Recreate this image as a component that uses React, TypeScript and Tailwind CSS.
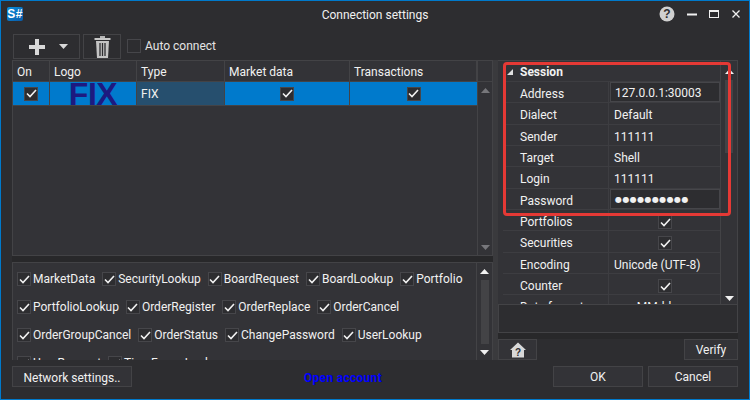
const font = "font-['Roboto','Noto_Sans',sans-serif]";

const Check = () => (
  <svg width="11" height="9" viewBox="0 0 11 9" fill="none">
    <path d="M1 4.5 L4 7.5 L10 1" stroke="#f1f1f1" strokeWidth="1.6" />
  </svg>
);

const Box = ({ className = "" }: { className?: string }) => (
  <span className={`flex h-[14px] w-[14px] shrink-0 items-center justify-center border border-[#46464a] bg-[#2d2d30] ${className}`}>
    <Check />
  </span>
);

const Arrow = ({ up, color = "#f1f1f1" }: { up?: boolean; color?: string }) => (
  <svg width="9" height="5" viewBox="0 0 9 5">
    <path d={up ? "M4.5 0 L9 5 L0 5 Z" : "M0 0 L9 0 L4.5 5 Z"} fill={color} />
  </svg>
);

const capabilities = [
  ["MarketData", "SecurityLookup", "BoardRequest", "BoardLookup", "Portfolio"],
  ["PortfolioLookup", "OrderRegister", "OrderReplace", "OrderCancel"],
  ["OrderGroupCancel", "OrderStatus", "ChangePassword", "UserLookup"],
  ["UserRequest", "TimeFrameLookup"],
];

const columns = [
  { title: "On", width: "w-[37px]" },
  { title: "Logo", width: "w-[87px]" },
  { title: "Type", width: "w-[88px]" },
  { title: "Market data", width: "w-[125px]" },
  { title: "Transactions", width: "w-[127px]" },
];

const props = [
  { name: "Address", value: "127.0.0.1:30003", boxed: true },
  { name: "Dialect", value: "Default" },
  { name: "Sender", value: "111111" },
  { name: "Target", value: "Shell" },
  { name: "Login", value: "111111" },
  { name: "Password", value: "●●●●●●●●●●", boxed: true, small: true },
  { name: "Portfolios", check: true },
  { name: "Securities", check: true },
  { name: "Encoding", value: "Unicode (UTF-8)" },
  { name: "Counter", check: true },
  { name: "Date format", value: "yyyyMMdd" },
];

const btn = "flex items-center justify-center border border-[#434346] bg-[#333337]";

export default function App() {
  return (
    <div className={`relative flex h-[400px] w-[750px] flex-col overflow-hidden border border-[#007acc] bg-[#2d2d30] text-[12px] leading-none text-[#f1f1f1] ${font}`}>
      {/* Title bar */}
      <div className="relative flex h-[33px] shrink-0 items-center justify-center pb-[6px]">
        <div className="absolute left-[6px] top-[6px] flex h-[14px] w-[16px] items-center justify-center rounded-[2px] bg-gradient-to-br from-[#0a8fdc] to-[#0a5aa8] font-['Liberation_Sans',sans-serif] text-[12px] font-bold tracking-[0.5px] text-white">
          S#
        </div>
        <span>Connection settings</span>
        <div className="absolute right-[9px] top-[5px] flex items-center">
          <svg width="16" height="16" viewBox="0 0 16 16" className="mr-[12px]">
            <circle cx="8" cy="8" r="7.5" fill="#d0d0d0" />
            <text x="8" y="12" textAnchor="middle" fontSize="12" fontWeight="700" fill="#2d2d30" fontFamily="Liberation Sans">?</text>
          </svg>
          <svg width="10" height="16" viewBox="0 0 10 16" className="mr-[12px]">
            <rect x="0" y="7.5" width="10" height="2" fill="#f1f1f1" />
          </svg>
          <svg width="10" height="16" viewBox="0 0 10 16" className="mr-[13px]">
            <rect x="0.5" y="4.5" width="9" height="7" fill="none" stroke="#f1f1f1" />
            <rect x="0" y="4" width="10" height="2" fill="#f1f1f1" />
          </svg>
          <svg width="8" height="16" viewBox="0 0 8 16">
            <path d="M0.5 4.5 L7.5 11.5 M7.5 4.5 L0.5 11.5" stroke="#f1f1f1" strokeWidth="1.3" />
          </svg>
        </div>
      </div>

      {/* Toolbar */}
      <div className="flex h-[26px] shrink-0 items-start pl-[12px]">
        <div className={`${btn} h-[25px] w-[67px] !bg-[#2d2d30]`}>
          <svg width="16" height="16" viewBox="0 0 16 16" className="ml-[3px]">
            <path d="M6 0 H10 V6 H16 V10 H10 V16 H6 V10 H0 V6 H6 Z" fill="#d8d8d8" />
          </svg>
          <span className="ml-[14px]"><Arrow color="#d8d8d8" /></span>
        </div>
        <div className={`${btn} ml-[3px] h-[25px] w-[38px] !bg-[#2d2d30]`}>
          <svg width="17" height="22" viewBox="0 0 17 22">
            <rect x="6" y="0" width="5" height="2" fill="#b5b5b5" />
            <rect x="0.5" y="2" width="16" height="2" fill="#c8c8c8" />
            <path d="M2 5 H15 L14 22 H3 Z" fill="#c4c4c4" />
            <path d="M6 7 V20 M8.5 7 V20 M11 7 V20" stroke="#2d2d30" strokeWidth="1.3" />
          </svg>
        </div>
        <span className="ml-[6px] mt-[5px] h-[14px] w-[14px] border border-[#46464a] bg-[#2d2d30]" />
        <span className="ml-[4px] mt-[6px] text-[#e4e4e4]">Auto connect</span>
      </div>

      {/* Main */}
      <div className="flex h-[300px] shrink-0 pl-[11px] pr-[11px]">
        <div className="flex w-[481px] shrink-0 flex-col">
          {/* Connections table */}
          <div className="flex h-[196px] border border-[#434346] bg-[#333337]">
            <div className="w-[464px] shrink-0">
              <div className="flex h-[21px] border-b border-[#434346]">
                {columns.map((c) => (
                  <div key={c.title} className={`${c.width} flex items-center border-r border-[#434346] pl-[4px] pt-[1px]`}>
                    {c.title}
                  </div>
                ))}
              </div>
              <div className="flex h-[24px] border-b border-[#434346] bg-[#007acc]">
                <div className="flex w-[37px] items-center justify-center border-r border-[#434346]"><Box /></div>
                <div className="flex w-[87px] items-center justify-center overflow-hidden border-r border-[#434346] font-['Liberation_Sans',sans-serif] text-[32px] font-bold tracking-[-0.5px] text-[#1d1a80]">
                  FIX
                </div>
                <div className="flex w-[88px] items-center border-r border-[#434346] bg-[#264f6e] pl-[4px]">FIX</div>
                <div className="flex w-[125px] items-center justify-center border-r border-[#434346]"><Box /></div>
                <div className="flex w-[127px] items-center justify-center"><Box /></div>
              </div>
            </div>
            <div className="flex flex-1 flex-col border-l border-[#434346]">
              <div className="h-[21px] border-b border-[#434346]" />
              <div className="flex flex-1 flex-col items-center justify-between pb-[5px] pt-[6px]">
                <Arrow up color="#77777b" />
                <Arrow color="#77777b" />
              </div>
            </div>
          </div>

          <div className="h-[6px] shrink-0 bg-[#28282a]" />

          {/* Message types */}
          <div className="flex h-[98px] overflow-hidden border border-b-0 border-[#434346] bg-[#333337]">
            <div className="flex-1 overflow-hidden px-[4px] pt-[9px]">
              {capabilities.map((row) => (
                <div key={row[0]} className="flex h-[28px] items-start gap-[7px]">
                  {row.map((name) => (
                    <div key={name} className="flex items-center gap-[2px]">
                      <Box />
                      <span className="whitespace-nowrap">{name}</span>
                    </div>
                  ))}
                </div>
              ))}
            </div>
            <div className="flex w-[16px] flex-col items-center border-l border-[#434346] pb-[5px] pt-[6px]">
              <Arrow up />
              <div className="my-[6px] w-[8px] flex-1 bg-[#434346]" />
              <Arrow />
            </div>
          </div>
        </div>

        <div className="w-[5px] shrink-0 bg-[#3a3a3d]" />

        {/* Property grid */}
        <div className="flex w-[240px] shrink-0 flex-col">
          <div className="flex h-[244px] overflow-hidden border-t border-r border-[#434346] bg-[#333337]">
            <div className="w-[222px] shrink-0 overflow-hidden pl-[5px]">
              <div className="flex h-[21px] items-center border-b border-[#3d3d41] pt-[1px]">
                <svg width="6" height="6" viewBox="0 0 6 6" className="ml-[4px]"><path d="M6 0 V6 H0 Z" fill="#e0e0e0" /></svg>
                <span className="ml-[7px] font-bold">Session</span>
              </div>
              {props.map((p) => (
                <div key={p.name} className="flex h-[21.33px] shrink-0 border-b border-[#3d3d41]">
                  <div className="flex w-[106px] items-center border-r border-[#3d3d41] pl-[17px] pt-[4px]">{p.name}</div>
                  <div className={`ml-[1px] flex flex-1 items-center pt-[4px] ${p.check ? "justify-center" : "pl-[4px]"} ${p.boxed ? "border border-[#46464a] bg-[#2d2d30] !pt-[2px]" : ""}`}>
                    {p.check ? <Box /> : <span className={p.small ? "font-['DejaVu_Sans'] text-[8px] tracking-[0.4px]" : ""}>{p.value}</span>}
                  </div>
                </div>
              ))}
            </div>
            <div className="flex flex-1 flex-col items-center border-l border-[#434346] pb-[3px] pt-[8px]">
              <Arrow up />
              <div className="mt-[6px] h-[73px] w-[8px] bg-[#434346]" />
              <div className="flex-1" />
              <Arrow />
            </div>
          </div>
          <div className="h-[29px] shrink-0 border border-[#434346] bg-[#2d2d30]" />
          <div className="h-[6px] shrink-0 bg-[#28282a]" />
          <div className="flex h-[21px] shrink-0 justify-between">
            <div className={`${btn} w-[39px]`}>
              <svg width="16" height="16" viewBox="0 0 16 16">
                <path d="M8 0.5 L16 8 H14 V15.5 H2 V8 H0 Z" fill="#d8d8d8" />
                <text x="8" y="13.5" textAnchor="middle" fontSize="10" fontWeight="700" fill="#2d2d30" fontFamily="Liberation Sans">?</text>
              </svg>
            </div>
            <div className={`${btn} w-[54px] pt-[1px]`}>Verify</div>
          </div>
        </div>
      </div>

      {/* Footer */}
      <div className="flex items-start pl-[11px] pr-[11px] pt-[6px]">
        <div className={`${btn} h-[21px] w-[120px] pt-[2px]`}>Network settings..</div>
        <div className="flex h-[21px] flex-1 items-center justify-center pl-[1px] pt-[2px] font-bold tracking-[0.3px] text-[#0000ff]">Open account</div>
        <div className={`${btn} h-[21px] w-[90px] pt-[1px]`}>OK</div>
        <div className={`${btn} ml-[5px] h-[21px] w-[90px] pt-[1px]`}>Cancel</div>
      </div>

      {/* Annotation drawn over the session settings */}
      <div className="absolute left-[502px] top-[61px] h-[154px] w-[228px] rounded-[4px] border-[3px] border-[#e53935]" />
    </div>
  );
}
